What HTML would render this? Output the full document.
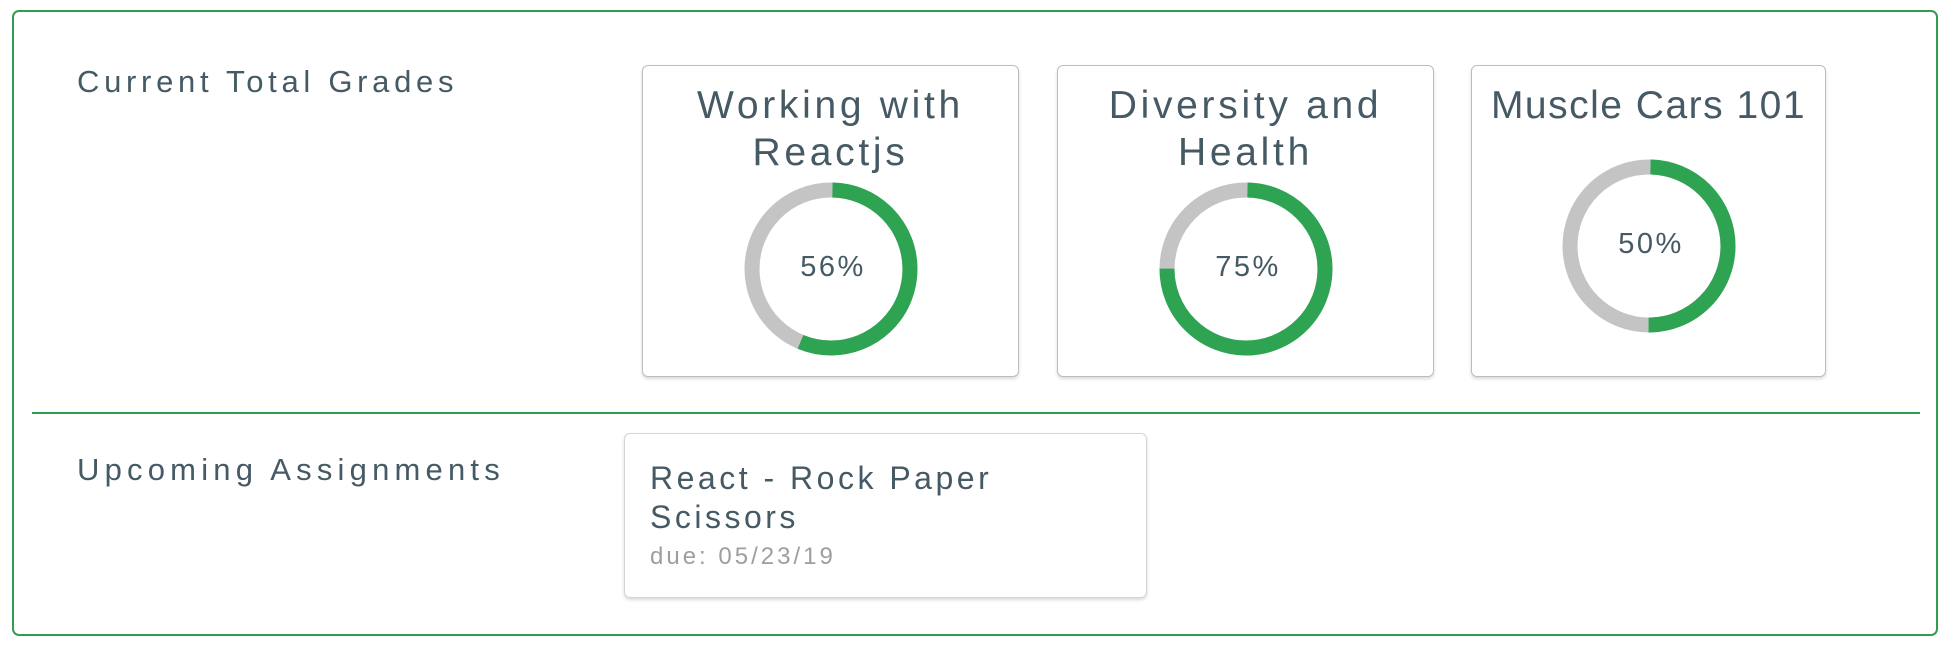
<!DOCTYPE html>
<html><head><meta charset="utf-8"><style>
*{margin:0;padding:0;box-sizing:border-box}
body{width:1956px;height:648px;background:#fff;font-family:"Liberation Sans",sans-serif;color:#455a64;position:relative;overflow:hidden}
.outer{position:absolute;left:12px;top:10px;width:1926px;height:626px;border:2px solid #2e9e50;border-radius:7px}
.lbl{position:absolute;font-size:31px;letter-spacing:4.7px;color:#455a64;white-space:nowrap}
.card{position:absolute;border:1.5px solid #bdbdbd;border-radius:6px;box-shadow:0 2px 3px rgba(0,0,0,.15);background:#fff}
.title{position:absolute;left:-20px;right:-20px;text-align:center;font-size:39px;line-height:47px;letter-spacing:3.7px;white-space:nowrap}
.card svg{position:absolute}
.pct{position:absolute;font-size:29px;letter-spacing:2.5px;text-align:center;width:130px}
.hr{position:absolute;left:32px;width:1888px;top:412px;height:2px;background:#2e9e50}
</style></head><body>
<div class="outer"></div>
<div class="lbl" style="left:77px;top:64px">Current Total Grades</div>

<div class="card" style="left:642px;top:65px;width:377px;height:312px">
 <div class="title" style="top:16px">Working with<br>Reactjs</div>
 <svg style="left:100px;top:115px" width="176" height="176" viewBox="0 0 176 176"><g transform="rotate(-90 88 88)">
 <circle cx="88" cy="88" r="79" fill="none" stroke="#c4c4c4" stroke-width="15"/>
 <circle cx="88" cy="88" r="79" fill="none" stroke="#2ea352" stroke-width="15" stroke-dasharray="277.9 500" stroke-dashoffset="-1.5"/></g></svg>
 <div class="pct" style="left:125px;top:185px">56%</div>
</div>

<div class="card" style="left:1057px;top:65px;width:377px;height:312px">
 <div class="title" style="top:16px">Diversity and<br>Health</div>
 <svg style="left:100px;top:115px" width="176" height="176" viewBox="0 0 176 176"><g transform="rotate(-90 88 88)">
 <circle cx="88" cy="88" r="79" fill="none" stroke="#c4c4c4" stroke-width="15"/>
 <circle cx="88" cy="88" r="79" fill="none" stroke="#2ea352" stroke-width="15" stroke-dasharray="371 500" stroke-dashoffset="-1.5"/></g></svg>
 <div class="pct" style="left:125px;top:185px">75%</div>
</div>

<div class="card" style="left:1471px;top:65px;width:355px;height:312px">
 <div class="title" style="top:16px;letter-spacing:1.5px">Muscle Cars 101</div>
 <svg style="left:89px;top:92px" width="176" height="176" viewBox="0 0 176 176"><g transform="rotate(-90 88 88)">
 <circle cx="88" cy="88" r="79" fill="none" stroke="#c4c4c4" stroke-width="15"/>
 <circle cx="88" cy="88" r="79" fill="none" stroke="#2ea352" stroke-width="15" stroke-dasharray="247 500" stroke-dashoffset="-1.5"/></g></svg>
 <div class="pct" style="left:114px;top:162px">50%</div>
</div>

<div class="hr"></div>
<div class="lbl" style="left:77px;top:452px;letter-spacing:5.2px">Upcoming Assignments</div>

<div class="card" style="left:624px;top:433px;width:523px;height:165px;border-color:#d5d5d5">
 <div style="position:absolute;left:25px;top:25px;font-size:32px;line-height:39px;letter-spacing:3.5px;white-space:nowrap">React - Rock Paper<br>Scissors</div>
 <div style="position:absolute;left:25px;top:109px;font-size:24px;letter-spacing:3px;color:#9e9e9e">due: 05/23/19</div>
</div>
</body></html>
